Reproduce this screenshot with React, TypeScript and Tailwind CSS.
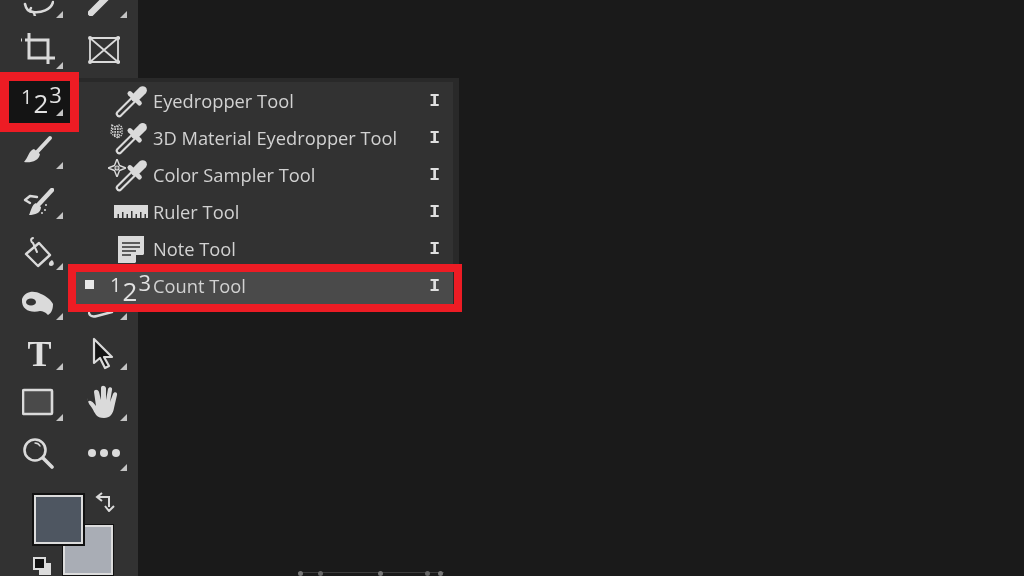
import React from 'react';

const ICON = '#dadada';
const PANEL = '#323232';

function Svg({ size = 32, children }: { size?: number; children: React.ReactNode }) {
  return (
    <svg width={size} height={size} viewBox="0 0 32 32" fill="none" stroke={ICON} strokeWidth="2.4" strokeLinecap="round" strokeLinejoin="round">
      {children}
    </svg>
  );
}

function Lasso() {
  return (
    <Svg>
      <path d="M3 20c1 5 4 8 8 8 8 1 18-2 20-10" strokeWidth="2.6" />
      <path d="M9 24c-2 3 0 4 2 4 2 1 1 3 2 4" strokeWidth="2.4" />
    </Svg>
  );
}

function Wand() {
  return (
    <Svg>
      <path d="M3 29L20 12" strokeWidth="6.5" />
      <path d="M21 11l6-6" strokeWidth="3" />
    </Svg>
  );
}

function Crop() {
  return (
    <svg width="36" height="36" viewBox="0 0 36 36" fill="none" stroke={ICON} strokeWidth="3">
      <path d="M9 1V26H32" />
      <path d="M5 8H28V32" />
      <path d="M1 8h1M32 26h3" />
    </svg>
  );
}

function Frame() {
  return (
    <Svg>
      <rect x="2" y="4" width="28" height="24" strokeWidth="1.8" />
      <path d="M2 4l28 24M30 4L2 28" strokeWidth="1.8" />
      <path d="M2 4h.1M30 4h.1M2 28h.1M30 28h.1" strokeWidth="4" />
    </Svg>
  );
}

function Brush() {
  return (
    <Svg>
      <path d="M28 3L15 17" strokeWidth="4" />
      <path d="M12 14c-5 1-6 9-10 13 7 1 15-1 16-8z" fill={ICON} stroke="none" />
    </Svg>
  );
}

function HistoryBrush() {
  return (
    <div className="mt-[5px]">
      <Svg>
        <path d="M30 2L17 16" strokeWidth="4.5" />
        <path d="M14 15c-4 1-5 8-7 12 6 0 12-2 12-8z" fill={ICON} stroke="none" />
        <path d="M3 12l5-4 7 1M3 12l5 3" strokeWidth="2.4" />
        <path d="M24 17v.1M23 22v.1M20 25v.1" strokeWidth="2" />
      </Svg>
    </div>
  );
}

function Bucket() {
  return (
    <Svg>
      <path d="M4 18L17 7l11 12-12 11z" />
      <path d="M11 2c-3 1-2 4 0 5l4 9" strokeWidth="2" />
      <path d="M30 24c3 3 2 6-1 6s-3-4 1-6z" fill={ICON} stroke="none" />
    </Svg>
  );
}

function Smudge() {
  return (
    <svg width="34" height="32" viewBox="0 0 34 32">
      <path d="M1 13c3-8 12-9 19-5 5 2 10 6 12 10 0 4-1 9-5 11-3-3-5-4-8-4-8 2-19 0-18-12z" fill={ICON} />
      <ellipse cx="10" cy="16" rx="5" ry="3.6" fill="#333" />
    </svg>
  );
}

function Arrow() {
  return (
    <svg width="28" height="34" viewBox="0 0 28 34" className="mt-[3px]">
      <path d="M4 2v24l6-5 5 10 4-2-5-9h8z" fill="#141414" stroke={ICON} strokeWidth="2.2" strokeLinejoin="round" />
    </svg>
  );
}

function RectTool() {
  return (
    <Svg>
      <rect x="1" y="3" width="29" height="24" rx="1" fill="#4a4a4a" strokeWidth="2.6" />
    </Svg>
  );
}

function Hand() {
  return (
    <svg width="36" height="36" viewBox="0 0 36 36" className="ml-[1px]">
      <path
        d="M1 17c2-3 5 0 8 4L7 7c0-3 4-3 5 0l2 8V3c0-3 4-3 5 0v12l2-11c1-3 5-2 4 1l-2 12 3-8c1-3 5-2 4 1l-3 13c-1 6-4 10-10 10-8 0-9-5-12-10-1-2-5-5-4-10z"
        fill={ICON}
      />
    </svg>
  );
}

function Zoom() {
  return (
    <Svg>
      <circle cx="13" cy="13" r="10.5" strokeWidth="2.6" />
      <path d="M21 21l9 9" strokeWidth="3.6" />
      <path d="M13 6c2 0 4 1 5 3" strokeWidth="1.4" />
    </Svg>
  );
}

function Dots() {
  return (
    <svg width="34" height="10" viewBox="0 0 34 10" fill={ICON}>
      <circle cx="5" cy="5" r="4" />
      <circle cx="17" cy="5" r="4" />
      <circle cx="29" cy="5" r="4" />
    </svg>
  );
}

function Pen() {
  return (
    <Svg>
      <path d="M1 27c1 4 4 4 8 3l15-4" strokeWidth="2.4" />
    </Svg>
  );
}

function Dropper() {
  return (
    <svg width="34" height="34" viewBox="0 0 32 32" fill="none" strokeLinecap="round" className="relative shrink-0">
      <path d="M4 28L17 15" stroke={ICON} strokeWidth="6.5" />
      <path d="M4 28L17 15" stroke={PANEL} strokeWidth="2.6" />
      <path d="M14 9l9 9" stroke={ICON} strokeWidth="4.5" />
      <path d="M19 13l7-7" stroke={ICON} strokeWidth="8" />
    </svg>
  );
}

function Pattern() {
  return (
    <svg width="14" height="16" viewBox="0 0 14 16" stroke={ICON} strokeWidth="1.3" strokeDasharray="1.5 1" className="shrink-0 -mr-[9px] -mt-[14px]">
      <path d="M2 2l3 2 4-2 3 2v8l-4 3-4-2-3-3zM2 6h10M2 9h10M4 12h6M5 3v11M8 3v12" fill="none" />
    </svg>
  );
}

function Sampler() {
  return (
    <svg width="18" height="18" viewBox="0 0 18 18" fill="none" stroke={ICON} className="shrink-0 -mr-[11px] -mt-[14px]">
      <path d="M9 0l2.5 6.5L18 9l-6.5 2.5L9 18l-2.5-6.5L0 9l6.5-2.5z" strokeWidth="1.4" strokeLinejoin="round" />
      <circle cx="9" cy="9" r="2" fill="#666" strokeWidth="1.1" />
    </svg>
  );
}

function Ruler() {
  return (
    <svg width="34" height="13" viewBox="0 0 34 13" className="shrink-0 mr-[1px]">
      <path
        d="M0 0h34v13h-2v-4h-1.5v4h-3V7H26v6h-3V9h-1.5v4h-3V6H17v7h-3V9h-1.5v4h-3V7H8v6H5V9H3.500v4H0z"
        fill={ICON}
      />
    </svg>
  );
}

function Note() {
  return (
    <svg width="26" height="27" viewBox="0 0 26 27" className="shrink-0 mr-[5px] mt-[2px]">
      <path d="M0 0h26v18l-9 9H0z" fill={ICON} />
      <path d="M4 7h18M4 11h18M4 15h14M4 19h9" stroke={PANEL} strokeWidth="1.7" />
      <path d="M18 27v-8h8" fill={PANEL} />
    </svg>
  );
}

function Digits() {
  return (
    <div className='flex items-start h-[30px] font-["Open_Sans",sans-serif] font-normal text-[#e2e2e2] leading-none'>
      <span className="text-[20px] mt-[4px] mr-[1px]">1</span>
      <span className="text-[26px] mt-[7px] mr-[1px]">2</span>
      <span className="text-[22px]">3</span>
    </div>
  );
}

function Corner({ right }: { right?: boolean }) {
  return (
    <svg
      width="7"
      height="7"
      viewBox="0 0 7 7"
      className={right ? 'absolute right-[11px] bottom-[7px]' : 'absolute right-[7px] bottom-[7px]'}
    >
      <path d="M7 0v7H0z" fill="#c4c4c4" />
    </svg>
  );
}

const tools: { node: React.ReactNode; corner: boolean; right?: boolean }[] = [
  { node: <Lasso />, corner: true },
  { node: <Wand />, corner: true, right: true },
  { node: <Crop />, corner: true },
  { node: <Frame />, corner: false, right: true },
  { node: null, corner: false },
  { node: null, corner: false, right: true },
  { node: <Brush />, corner: true },
  { node: null, corner: false, right: true },
  { node: <HistoryBrush />, corner: true },
  { node: null, corner: false, right: true },
  { node: <Bucket />, corner: true },
  { node: null, corner: false, right: true },
  { node: <Smudge />, corner: true },
  { node: <Pen />, corner: true, right: true },
  { node: <span className='font-["Liberation_Serif",serif] font-bold text-[36px] leading-none text-[#e0e0e0] mt-[3px] ml-[3px]'>T</span>, corner: true },
  { node: <Arrow />, corner: true, right: true },
  { node: <RectTool />, corner: true },
  { node: <Hand />, corner: true, right: true },
  { node: <Zoom />, corner: false },
  { node: <Dots />, corner: true, right: true },
];

const menuItems: { label: string; icon: React.ReactNode; extra?: React.ReactNode; active?: boolean }[] = [
  { label: 'Eyedropper Tool', icon: <Dropper /> },
  { label: '3D Material Eyedropper Tool', icon: <Dropper />, extra: <Pattern /> },
  { label: 'Color Sampler Tool', icon: <Dropper />, extra: <Sampler /> },
  { label: 'Ruler Tool', icon: <Ruler /> },
  { label: 'Note Tool', icon: <Note /> },
  { label: 'Count Tool', icon: <Digits />, active: true },
];

export default function App() {
  return (
    <div className='relative w-[1024px] h-[576px] overflow-hidden bg-[#1a1a1a] font-["Open_Sans",sans-serif] blur-[0.6px]'>
      {/* Tools bar */}
      <div className="w-[138px] h-full bg-[#323232] overflow-hidden">
        <div className="grid grid-cols-[70px_68px] auto-rows-[50.3px] -mt-[25px]">
          {tools.map((tool, i) => (
            <div key={i} className={tool.right ? 'relative flex items-center justify-center' : 'relative flex items-center justify-center pl-[6px]'}>
              {tool.node}
              {tool.corner && <Corner right={tool.right} />}
            </div>
          ))}
        </div>

        {/* Colour swatches */}
        <div className="relative h-[100px] mt-[17px]">
          <div className="absolute left-[63px] top-[30px] w-[50px] h-[50px] bg-[#a9adb5] border-[2px] border-[#dcdcdc] outline outline-[1px] outline-[#111]" />
          <div className="absolute left-[34px] top-0 w-[49px] h-[49px] bg-[#4e5661] border-[2px] border-[#dcdcdc] outline outline-[2px] outline-[#111]" />
          <svg width="20" height="20" viewBox="0 0 20 20" fill="none" stroke={ICON} strokeWidth="2" className="absolute left-[95px] top-[-3px]">
            <path d="M7 1L2 5l5 4M2 5h12v10M10 14l4 5 5-5" />
          </svg>
          <div className="absolute left-[39px] top-[68px] w-[12px] h-[12px] bg-[#dcdcdc]" />
          <div className="absolute left-[33px] top-[62px] w-[13px] h-[13px] bg-[#111] border-[2px] border-[#dcdcdc]" />
        </div>
      </div>

      {/* Flyout menu */}
      <div className="absolute left-[70px] top-[78px] w-[389px] h-[234px] bg-[#292929] pt-[4px] pr-[6px] pb-[4px]">
        <div className="h-full bg-[#323232] flex flex-col">
          {menuItems.map((item) => (
            <div
              key={item.label}
              className={item.active ? 'relative h-[37px] flex items-center bg-[#4a4a4a] text-[#d2d2d2]' : 'relative h-[37px] flex items-center text-[#d2d2d2]'}
            >
              <div className={item.active ? 'w-[83px] h-full shrink-0 flex items-center justify-end pr-[2px]' : 'w-[83px] h-full shrink-0 flex items-center justify-end pr-[4px]'}>
                {item.active && <div className="absolute left-[15px] top-[13px] w-[9px] h-[9px] bg-[#e8e8e8]" />}
                {item.extra}
                {item.icon}
              </div>
              <span className="text-[18.3px] leading-none whitespace-nowrap mt-[1px]">{item.label}</span>
              <span className='ml-auto mr-[13px] font-["Liberation_Mono",monospace] font-bold text-[18px] leading-none text-[#e0e0e0] mt-[1px]'>I</span>
            </div>
          ))}
        </div>
      </div>

      {/* Active tool highlight */}
      <div className="absolute left-0 top-[72px] w-[79px] h-[60px] border-[9px] border-[#ed1c24] bg-[#141414]">
        <div className="absolute left-[12px] top-[2px]">
          <Digits />
        </div>
        <Corner />
      </div>

      {/* Count Tool highlight */}
      <div className="absolute left-[68px] top-[264px] w-[394px] h-[48px] border-[8px] border-[#ed1c24]" />

      {/* Transform handles peeking in at the bottom edge */}
      <div className="absolute left-[298px] bottom-0 w-[146px] h-[5px] flex items-end">
        <div className="absolute left-0 right-0 top-[1px] h-[1px] bg-[#3c3c3c]" />
        <div className="relative w-[5px] h-[5px] rounded-full bg-[#777]" />
        <div className="relative ml-[15px] w-[5px] h-[5px] rounded-full bg-[#666]" />
        <div className="relative ml-[55px] w-[5px] h-[5px] rounded-full bg-[#777]" />
        <div className="relative ml-[42px] w-[5px] h-[5px] rounded-full bg-[#666]" />
        <div className="relative ml-[8px] w-[5px] h-[5px] rounded-full bg-[#777]" />
      </div>
    </div>
  );
}
